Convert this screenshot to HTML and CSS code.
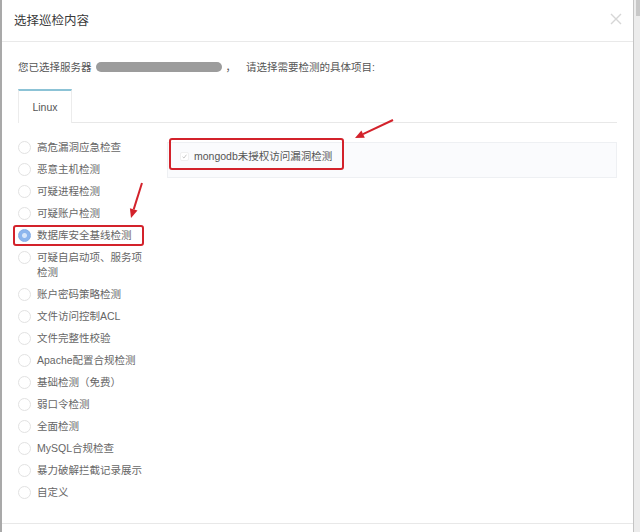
FILE: index.html
```html
<!DOCTYPE html>
<html>
    <head>
        <meta charset="utf-8">
        <title>选择巡检内容</title>
        <link rel="stylesheet" href="styles.css">
    </head>
    <body>
        <div class="edge"></div>
        <div class="modal">
            <div class="modal-header">
                <span class="title">选择巡检内容</span>
                <svg class="close" width="12" height="12" viewBox="0 0 12 12">
                    <path d="M1 1L11 11M11 1L1 11" stroke="#d6d6d6" stroke-width="1.4"/>
                </svg>
            </div>
            <div class="modal-body">
                <p class="intro">您已选择服务器<span class="pill"></span><span class="sep">，</span>请选择需要检测的具体项目:</p>
                <div class="tabs">
                    <div class="tab">Linux</div>
                </div>
                <div class="content">
                    <ul class="radios">
                        <li><span class="radio"></span><span class="label">高危漏洞应急检查</span></li>
                        <li><span class="radio"></span><span class="label">恶意主机检测</span></li>
                        <li><span class="radio"></span><span class="label">可疑进程检测</span></li>
                        <li><span class="radio"></span><span class="label">可疑账户检测</span></li>
                        <li><span class="radio checked"></span><span class="label">数据库安全基线检测</span></li>
                        <li><span class="radio"></span><span class="label">可疑自启动项、服务项检测</span></li>
                        <li><span class="radio"></span><span class="label">账户密码策略检测</span></li>
                        <li><span class="radio"></span><span class="label">文件访问控制ACL</span></li>
                        <li><span class="radio"></span><span class="label">文件完整性校验</span></li>
                        <li><span class="radio"></span><span class="label">Apache配置合规检测</span></li>
                        <li><span class="radio"></span><span class="label">基础检测（免费）</span></li>
                        <li><span class="radio"></span><span class="label">弱口令检测</span></li>
                        <li><span class="radio"></span><span class="label">全面检测</span></li>
                        <li><span class="radio"></span><span class="label">MySQL合规检查</span></li>
                        <li><span class="radio"></span><span class="label">暴力破解拦截记录展示</span></li>
                        <li><span class="radio"></span><span class="label">自定义</span></li>
                    </ul>
                    <div class="panel">
                        <label class="check-item">
                            <svg class="check" width="9" height="9" viewBox="0 0 9 9">
                                <path d="M2 4.8L3.8 6.5L7 2.2" fill="none" stroke="#bdbdbd" stroke-width="1.1"/>
                            </svg>
                            mongodb未授权访问漏洞检测
                        </label>
                    </div>
                </div>
            </div>
            <div class="modal-footer"></div>

            <div class="mark mark-radio"></div>
            <div class="mark mark-check"></div>
            <svg class="arrows" width="631" height="532" viewBox="0 0 631 532">
                <line x1="391" y1="120" x2="361" y2="134.2" stroke="#d3222b" stroke-width="2"/>
                <polygon points="353,138 362.8,137.8 359.4,130.5" fill="#d3222b"/>
                <line x1="140" y1="183" x2="131.7" y2="209.4" stroke="#d3222b" stroke-width="2"/>
                <polygon points="129,218 135.5,210.6 127.9,208.2" fill="#d3222b"/>
            </svg>
        </div>
        <div class="scroll">
            <div class="thumb"></div>
        </div>
    </body>
</html>
```

FILE: styles.css
```css
html {
    font-family: "Liberation Sans", "Noto Sans CJK SC", sans-serif;
    font-size: 10.5px;
}

* {
    box-sizing: border-box;
}

body {
    margin: 0;
    height: 532px;
    display: flex;
    background: #e6e6e6;
    color: #666;
    overflow: hidden;
}

.edge {
    width: 2px;
    background: #a9a9a9;
}

.modal {
    position: relative;
    width: 631px;
    height: 532px;
    display: flex;
    flex-direction: column;
    background: #fff;
}

.modal-header {
    height: 42px;
    padding: 0 11px 0 12px;
    display: flex;
    align-items: center;
    justify-content: space-between;
    border-bottom: 1px solid #e9e9e9;
}

.title {
    font-size: 12.5px;
    color: #3a3a3a;
    margin-top: -2px;
}

.close {
    margin-top: -4px;
}

.modal-body {
    flex: 1;
    padding: 0 16px;
}

.intro {
    margin: 18px 0 0;
    line-height: 15px;
    color: #555;
}

.pill {
    display: inline-block;
    width: 126px;
    height: 10px;
    margin: 0 4px 0 4px;
    border-radius: 5px;
    background: #9c9c9c;
    vertical-align: -1px;
    filter: blur(0.4px);
}

.sep {
    margin-right: 10px;
}

.tabs {
    margin-top: 14px;
    display: flex;
    border-bottom: 1px solid #e8e8e8;
}

.tab {
    width: 54px;
    height: 34px;
    margin-bottom: -1px;
    line-height: 32px;
    text-align: center;
    color: #555;
    background: #fff;
    border-top: 2px solid #8cc3d6;
    border-left: 1px solid #ececec;
    border-right: 1px solid #ececec;
}

.content {
    display: flex;
    gap: 19px;
    margin-top: 17px;
}

.radios {
    list-style: none;
    margin: 0;
    padding: 0;
    width: 130px;
}

.radios li {
    display: flex;
    align-items: flex-start;
    gap: 6px;
    line-height: 15px;
    margin-bottom: 7px;
}

.radio {
    flex: none;
    width: 13px;
    height: 13px;
    margin-top: 1px;
    border-radius: 50%;
    border: 1px solid #e2e2e2;
    background: #fff;
}

.radio.checked {
    border-color: #86aee6;
    background: radial-gradient(circle, #d7e6fa 0 2px, #8db6ee 3px);
}

.label {
    width: 108px;
    color: #666;
}

.panel {
    flex: 1;
    height: 36px;
    margin-top: 2px;
    padding: 6px 12px;
    background: #fafbfd;
    border: 1px solid #eef0f3;
}

.check-item {
    display: flex;
    align-items: center;
    gap: 5px;
    line-height: 15px;
    color: #555;
}

.check {
    border: 1px solid #f0f0f0;
    border-radius: 2px;
    background: #fff;
}

.modal-footer {
    height: 9px;
    border-top: 1px solid #e8e8e8;
}

.mark {
    position: absolute;
    border: 2px solid #d3222b;
    border-radius: 3px;
}

.mark-radio {
    left: 11px;
    top: 225px;
    width: 131px;
    height: 21px;
}

.mark-check {
    left: 167px;
    top: 138px;
    width: 175px;
    height: 32px;
}

.arrows {
    position: absolute;
    left: 0;
    top: 0;
    pointer-events: none;
}

.scroll {
    flex: 1;
    background: #ececec;
    border-left: 1px solid #c4c4c4;
}

.thumb {
    height: 16px;
    margin-left: 2px;
    background: #c8c8c8;
}
```
